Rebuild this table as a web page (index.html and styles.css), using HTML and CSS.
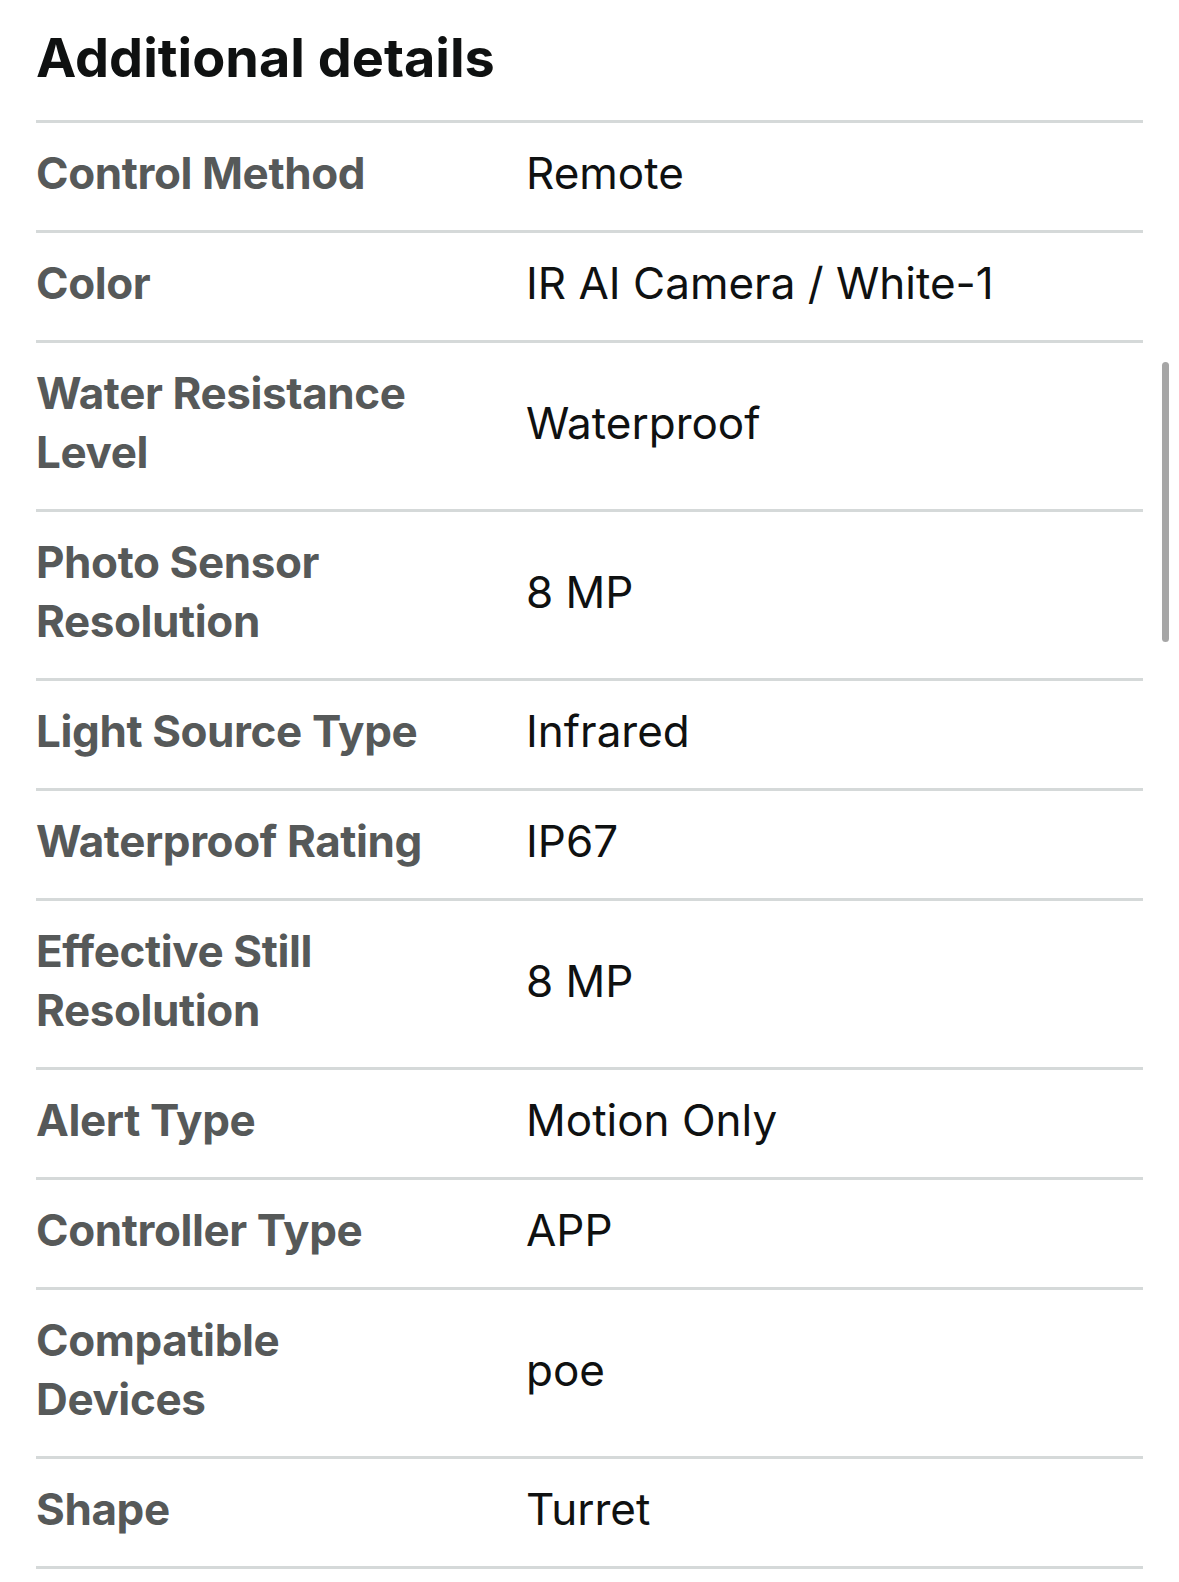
FILE: index.html
```html
<!DOCTYPE html>
<html lang="en">
<head>
<meta charset="utf-8">
<title>Additional details</title>
<link rel="stylesheet" href="styles.css">
</head>
<body>
<main class="details">
  <h2 class="details-title">Additional details</h2>
  <div class="details-table">
    <div class="row"><div class="label">Control Method</div><div class="value">Remote</div></div>
    <div class="row"><div class="label">Color</div><div class="value">IR AI Camera / White-1</div></div>
    <div class="row"><div class="label">Water Resistance Level</div><div class="value">Waterproof</div></div>
    <div class="row"><div class="label">Photo Sensor Resolution</div><div class="value">8 MP</div></div>
    <div class="row"><div class="label">Light Source Type</div><div class="value">Infrared</div></div>
    <div class="row"><div class="label">Waterproof Rating</div><div class="value">IP67</div></div>
    <div class="row"><div class="label">Effective Still Resolution</div><div class="value">8 MP</div></div>
    <div class="row"><div class="label">Alert Type</div><div class="value">Motion Only</div></div>
    <div class="row"><div class="label">Controller Type</div><div class="value">APP</div></div>
    <div class="row"><div class="label">Compatible Devices</div><div class="value">poe</div></div>
    <div class="row"><div class="label">Shape</div><div class="value">Turret</div></div>
  </div>
</main>
<div class="scrollbar"></div>
</body>
</html>
```
FILE: styles.css
```css
html, body {
  margin: 0;
  padding: 0;
  background: #ffffff;
}

body {
  font-family: Inter, "Noto Sans", sans-serif;
  color: #0f1111;
  overflow: hidden;
}

.details {
  padding: 0 36px;
}

.details-title {
  margin: 0 0 30px 0;
  padding-top: 25px;
  font-size: 54px;
  line-height: 65px;
  font-weight: 700;
  color: #0f1111;
}

.row {
  display: grid;
  grid-template-columns: 405px 1fr;
  column-gap: 85px;
  align-items: center;
  border-top: 3px solid #d5d9d9;
  padding: 21px 0 27px 0;
  font-size: 44px;
  line-height: 59px;
}

.row:last-child {
  border-bottom: 3px solid #d5d9d9;
}

.label {
  font-weight: 700;
  color: #565959;
  letter-spacing: -0.4px;
}

.value {
  font-weight: 400;
  color: #0f1111;
}

.scrollbar {
  position: absolute;
  left: 1162px;
  top: 362px;
  width: 7px;
  height: 280px;
  border-radius: 4px;
  background: #a6a6a6;
}
```
